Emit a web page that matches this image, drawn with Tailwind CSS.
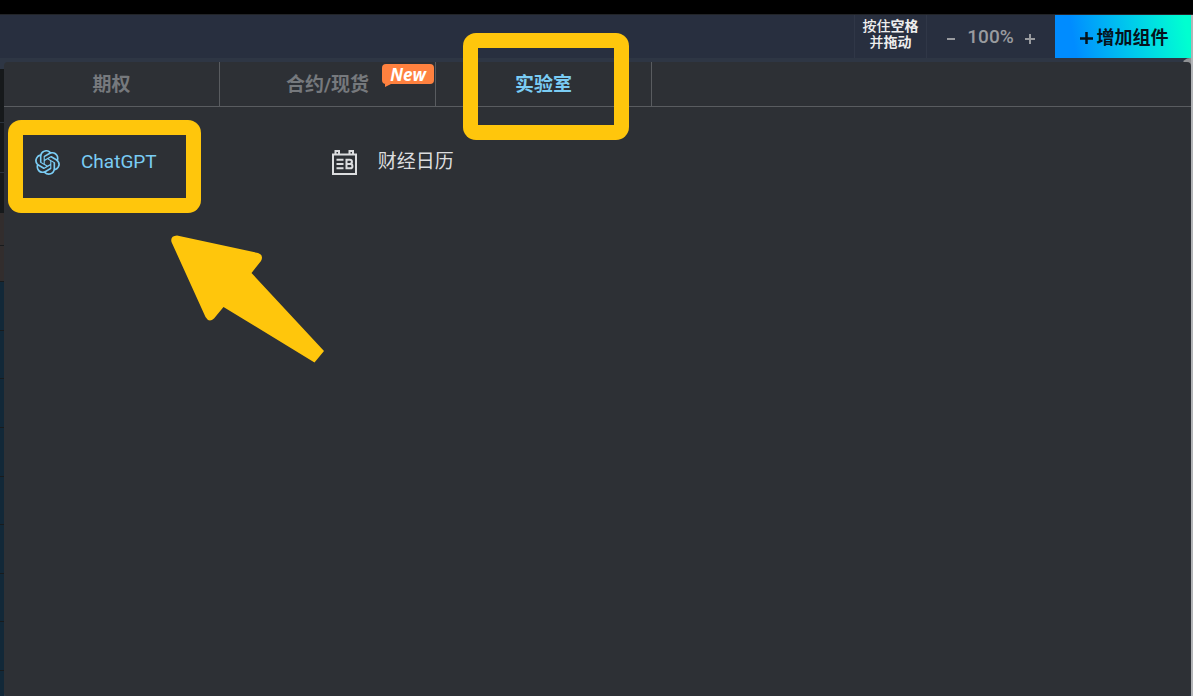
<!DOCTYPE html>
<html lang="zh-CN">
<head>
  <meta charset="UTF-8" />
  <meta name="viewport" content="width=device-width, initial-scale=1.0" />
  <title>增加组件</title>
  <script src="https://cdn.jsdelivr.net/npm/@tailwindcss/browser@4"></script>
</head>
<body class="flex flex-col h-screen overflow-hidden bg-[#2e3644] font-['Roboto','Noto_Sans_CJK_SC',sans-serif]">

  <div class="h-[15px] shrink-0 bg-black border-b border-[#222428]"></div>

  <div class="flex flex-col flex-1 min-h-0 border-r-2 border-[#b3b5b8]">

    <!-- toolbar -->
    <header class="flex justify-end h-[43px] shrink-0 bg-[#282f3f]">
      <div class="w-[73px] border-x border-[#303747] pt-[3px] text-center text-[14px] leading-[16px] font-medium text-[#eeeeee]">
        按住<b>空格</b><br />并<b>拖动</b>
      </div>
      <div class="flex items-center w-[128px] pl-[17px] pt-[2px] text-[19px] font-medium text-[#999b9f]">
        <button type="button" aria-label="缩小" class="w-[14px] h-6 flex items-center justify-center">
          <svg class="w-2 h-2" viewBox="0 0 8 8"><path d="M0 5h8" stroke="currentColor" stroke-width="2" /></svg>
        </button>
        <span class="flex-1 text-center">100%</span>
        <button type="button" aria-label="放大" class="w-[14px] h-6 mr-[18px] flex items-center justify-center">
          <svg class="w-3 h-3" viewBox="0 0 12 12"><path d="M1 7h10M6 2v10" stroke="currentColor" stroke-width="2" /></svg>
        </button>
      </div>
      <button type="button" class="flex items-center justify-center gap-1 w-[136px] pl-[2px] pt-px bg-linear-80 from-[#008cff] from-15% to-[#00ffd0] to-95% text-[18px] font-bold text-[#06121c]">
        <svg class="w-[13px] h-[13px]" viewBox="0 0 13 13"><path d="M0 7.500h13M6.500 1v13" stroke="currentColor" stroke-width="2.500" /></svg>
        增加组件
      </button>
    </header>

    <div class="relative flex flex-1 min-h-0 pt-1">
      <div class="absolute right-0 top-0 w-[9px] h-2 rounded-tl-full bg-[#8f9194]"></div>

      <!-- rows of the list behind the panel -->
      <div class="w-1 shrink-0 flex flex-col pt-[7px]">
        <div class="h-[54px] bg-[#16191b] border-b border-[#2b333d]"></div>
        <div class="h-[50px] bg-[#16191b] border-b border-[#2b333d]"></div>
        <div class="h-[40px] bg-[#16191b]"></div>
        <div class="h-[33px] bg-[#322d2d] border-b border-[#181b1d]"></div>
        <div class="h-[36px] bg-[#322d2d] border-b border-[#181b1d]"></div>
        <div class="h-[49px] shrink-0 bg-[#122838] border-b border-[#181b1d]"></div>
        <div class="h-[48px] shrink-0 bg-[#122838] border-b border-[#181b1d]"></div>
        <div class="h-[49px] shrink-0 bg-[#122838] border-b border-[#181b1d]"></div>
        <div class="h-[49px] shrink-0 bg-[#122838] border-b border-[#181b1d]"></div>
        <div class="h-[48px] shrink-0 bg-[#122838] border-b border-[#181b1d]"></div>
        <div class="h-[49px] shrink-0 bg-[#122838] border-b border-[#181b1d]"></div>
        <div class="h-[48px] shrink-0 bg-[#122838] border-b border-[#181b1d]"></div>
        <div class="h-[49px] shrink-0 bg-[#122838] border-b border-[#181b1d]"></div>
        <div class="flex-1 bg-[#122838]"></div>
      </div>

      <main class="relative flex-1 rounded-[4px] bg-[#2d3035]">
        <nav class="flex h-[45px] border-b border-[#595c60] text-[19px] font-bold text-[#76797d]">
          <button type="button" class="w-[216px] pt-[2px] border-r border-[#595c60]">期权</button>
          <button type="button" class="relative w-[216px] pt-[2px] border-r border-[#595c60]">
            合约/现货
            <span class="absolute right-px top-[2px] w-[52px] h-[20px] rounded-[4px] bg-[#ff813f] text-[17px] leading-[21px] font-['Open_Sans'] italic text-white">
              New
              <svg class="absolute left-[3px] top-full w-[6px] h-[3px]" viewBox="0 0 6 3"><path d="M0 0h6L0 3z" fill="#ff813f" /></svg>
            </span>
          </button>
          <button type="button" class="relative w-[216px] pt-[2px] border-r border-[#595c60] text-[#7accf4]">
            实验室
            <span class="absolute left-[27px] -top-[29px] w-[166px] h-[107px] rounded-[13px] bg-[#ffc60c] [clip-path:path(evenodd,'M0_0H166V107H0ZM15_15V92H151V15Z')]"></span>
          </button>
        </nav>

        <div class="grid grid-cols-4 pt-[38px] text-[19px] leading-[34px] text-[#dcdddf]">
          <div class="relative pl-[31px]">
            <a href="#" class="flex items-center gap-[21px] text-[#7accf4]">
              <svg class="w-[25px] h-[25px] shrink-0" viewBox="0 0 24 24" fill="currentColor"><path d="M22.2819 9.8211a5.9847 5.9847 0 0 0-.5157-4.9108 6.0462 6.0462 0 0 0-6.5098-2.9A6.0651 6.0651 0 0 0 4.9807 4.1818a5.9847 5.9847 0 0 0-3.9977 2.9 6.0462 6.0462 0 0 0 .7427 7.0966 5.98 5.98 0 0 0 .511 4.9107 6.051 6.051 0 0 0 6.5146 2.9001A5.9847 5.9847 0 0 0 13.2599 24a6.0557 6.0557 0 0 0 5.7718-4.2058 5.9894 5.9894 0 0 0 3.9977-2.9001 6.0557 6.0557 0 0 0-.7475-7.0729zm-9.022 12.6081a4.4755 4.4755 0 0 1-2.8764-1.0408l.1419-.0804 4.7783-2.7582a.7948.7948 0 0 0 .3927-.6813v-6.7369l2.02 1.1686a.071.071 0 0 1 .038.052v5.5826a4.504 4.504 0 0 1-4.4945 4.4944zm-9.6607-4.1254a4.4708 4.4708 0 0 1-.5346-3.0137l.142.0852 4.783 2.7582a.7712.7712 0 0 0 .7806 0l5.8428-3.3685v2.3324a.0804.0804 0 0 1-.0332.0615L9.74 19.9502a4.4992 4.4992 0 0 1-6.1408-1.6464zM2.3408 7.8956a4.485 4.485 0 0 1 2.3655-1.9728V11.6a.7664.7664 0 0 0 .3879.6765l5.8144 3.3543-2.0201 1.1685a.0757.0757 0 0 1-.071 0l-4.8303-2.7865A4.504 4.504 0 0 1 2.3408 7.872zm16.5963 3.8558L13.1038 8.364 15.1192 7.2a.0757.0757 0 0 1 .071 0l4.8303 2.7913a4.4944 4.4944 0 0 1-.6765 8.1042v-5.6772a.79.79 0 0 0-.407-.667zm2.0107-3.0231l-.142-.0852-4.7735-2.7818a.7759.7759 0 0 0-.7854 0L9.409 9.2297V6.8974a.0662.0662 0 0 1 .0284-.0615l4.8303-2.7866a4.4992 4.4992 0 0 1 6.6802 4.66zM8.3065 12.863l-2.02-1.1638a.0804.0804 0 0 1-.038-.0567V6.0742a4.4992 4.4992 0 0 1 7.3757-3.4537l-.142.0805L8.704 5.459a.7948.7948 0 0 0-.3927.6813zm1.0976-2.3654l2.602-1.4998 2.6069 1.4998v2.9994l-2.5974 1.4997-2.6067-1.4997Z" /></svg>
              ChatGPT
            </a>
            <span class="absolute left-1 -top-[25px] w-[193px] h-[93px] rounded-[13px] bg-[#ffc60c] pointer-events-none [clip-path:path(evenodd,'M0_0H193V93H0ZM15_15V78H178V15Z')]"></span>
            <!-- arrow pointing at ChatGPT -->
            <svg class="absolute left-[166px] top-[89px] w-[155px] h-[130px] pointer-events-none" viewBox="170 234 155 130">
              <path d="M177 235.500L258 253Q264 255 261 261L251.500 273L324 351L314.500 362.500L223.500 307L214 318.500Q209 323 205.500 317L171.500 242Q170 236 177 235.500Z" fill="#ffc60c" />
            </svg>
          </div>
          <a href="#" class="flex items-center gap-[21px] pl-[31px]">
            <svg class="w-[25px] h-[25px] shrink-0" viewBox="0 0 25 25" fill="none" stroke="currentColor" stroke-width="2">
              <path d="M1 4.500h23v19.500H1zM3.500 4.500V1h3.500v3.500M17.500 4.500V1h3.500v3.500" />
              <path d="M4.500 9.700h7M4.500 14h7M4.500 18.300h7" />
              <path d="M14.500 9.700h3.300a2.100 2.100 0 0 1 0 4.300h-3.300zM14.500 14h3.800a2.100 2.100 0 0 1 0 4.300h-3.800z" />
            </svg>
            财经日历
          </a>
        </div>
      </main>
    </div>
  </div>

</body>
</html>
